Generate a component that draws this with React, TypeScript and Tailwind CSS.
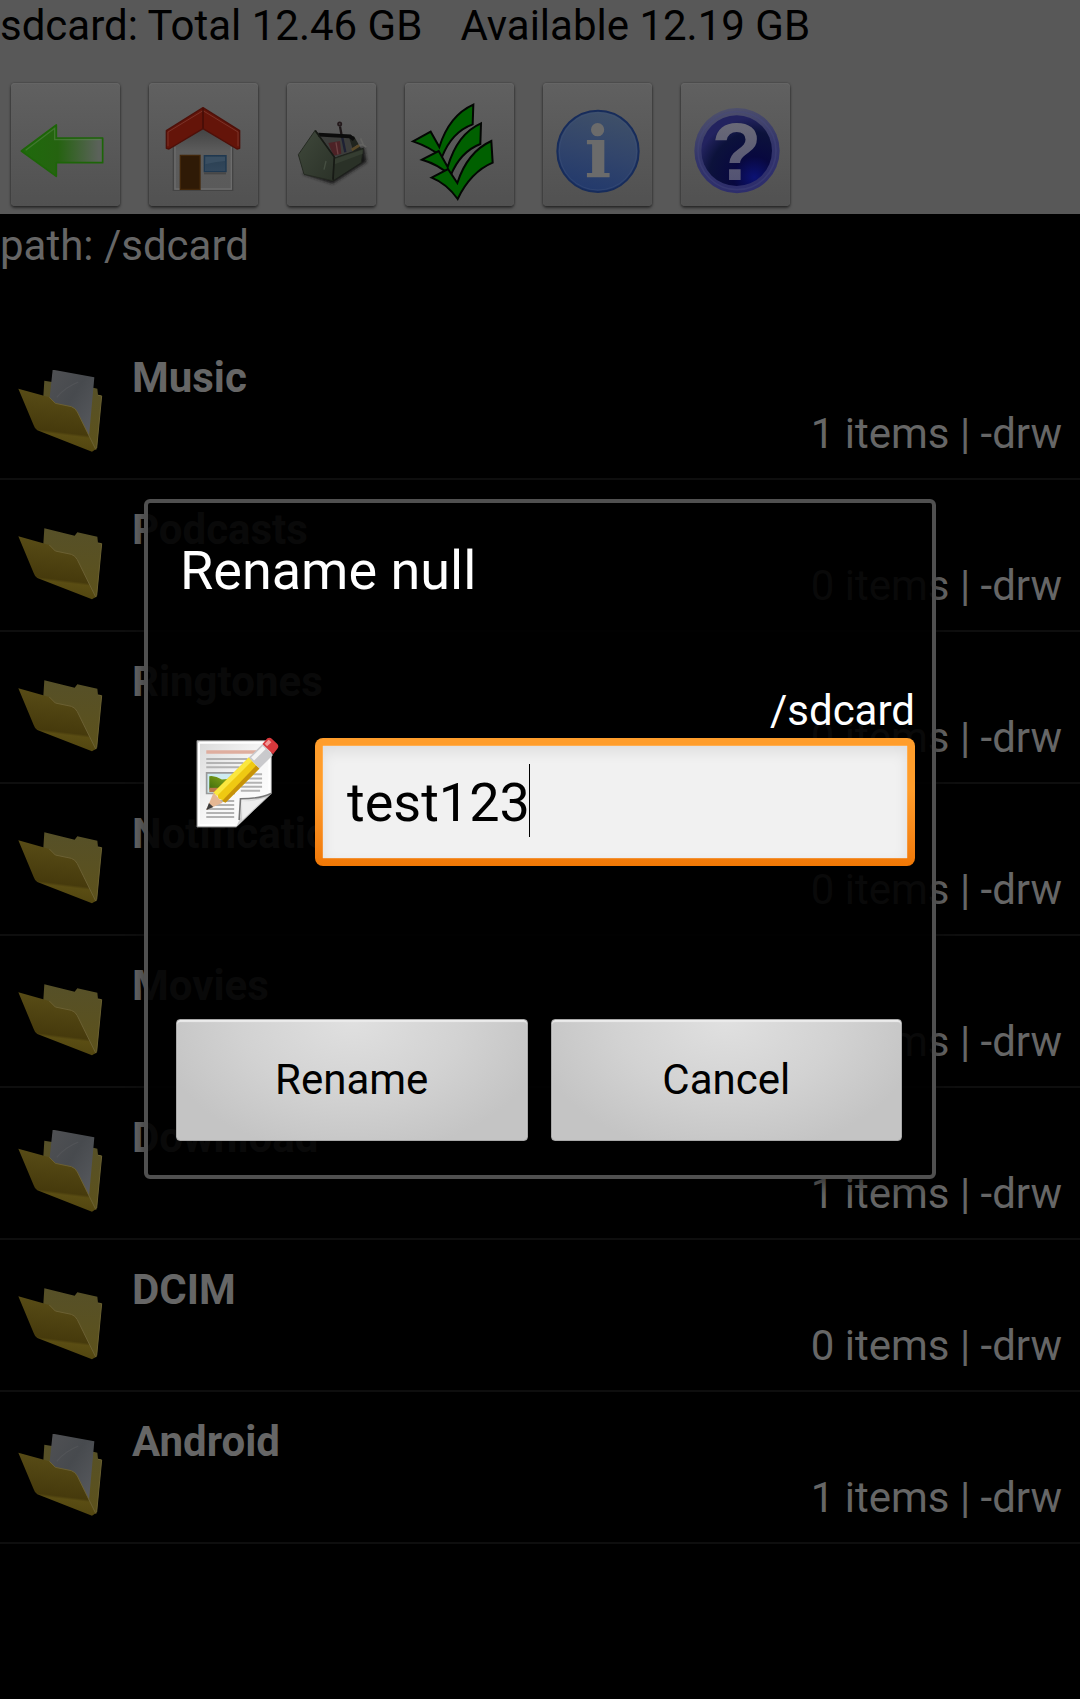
import { useState, type ReactNode } from "react";

const folders = [
  { name: "Music", items: 1 },
  { name: "Podcasts", items: 0 },
  { name: "Ringtones", items: 0 },
  { name: "Notifications", items: 0 },
  { name: "Movies", items: 0 },
  { name: "Download", items: 1 },
  { name: "DCIM", items: 0 },
  { name: "Android", items: 1 },
];

function BackIcon() {
  return (
    <svg viewBox="36 248 327 369" className="h-full w-full" aria-hidden="true">
      <defs>
        <linearGradient id="arrow" x1="0" x2="1" y1="0" y2="0">
          <stop offset="0" stopColor="#1f6a0c" />
          <stop offset="0.45" stopColor="#256310" />
          <stop offset="0.95" stopColor="#5b625a" />
        </linearGradient>
      </defs>
      <path d="M67 452 172 374V413H311V487H172V528Z" fill="url(#arrow)" stroke="#1d6508" strokeWidth="5" strokeLinejoin="round" />
      <path d="M80 450 167 384V418H305" fill="none" stroke="#5d8a50" strokeWidth="4" opacity="0.5" />
    </svg>
  );
}

function HomeIcon() {
  return (
    <svg viewBox="447 248 327 369" className="h-full w-full" aria-hidden="true">
      <defs>
        <linearGradient id="wall" x1="0" x2="0" y1="0" y2="1">
          <stop offset="0" stopColor="#3f3f3f" />
          <stop offset="0.4" stopColor="#5c5c5c" />
          <stop offset="1" stopColor="#5a5a5a" />
        </linearGradient>
        <linearGradient id="pane" x1="0" x2="0" y1="0" y2="1">
          <stop offset="0" stopColor="#2a3f52" />
          <stop offset="1" stopColor="#32475b" />
        </linearGradient>
      </defs>
      <path d="M520 430 609 375 698 430V570H520Z" fill="url(#wall)" stroke="#444" strokeWidth="4" />
      <path d="M525 440V566H694V440" fill="none" stroke="#6c6c6c" strokeWidth="4" />
      <path d="M541 465H600V567H541Z" fill="#2f1a06" stroke="#42270b" strokeWidth="4" />
      <path d="M613 466H678V514H613Z" fill="url(#pane)" stroke="#1f3850" strokeWidth="4" />
      <path d="M616 492Q645 484 675 482V469H616Z" fill="#394e61" />
      <path d="M612 519H678" stroke="#474747" strokeWidth="6" />
      <path d="M609 322 719 391V444L711 446 609 385 507 446 499 444V391Z" fill="#641409" stroke="#4e1009" strokeWidth="4" strokeLinejoin="round" />
      <path d="M609 331 504 395V438M609 331 714 395V438" fill="none" stroke="#7a3329" strokeWidth="3" />
      <path d="M609 324V384" stroke="#3f0c06" strokeWidth="4" />
    </svg>
  );
}

function ToolboxIcon() {
  return (
    <svg viewBox="861 248 267 369" className="h-full w-full" aria-hidden="true">
      <defs>
        <filter id="boxShadow" x="-20%" y="-20%" width="140%" height="140%">
          <feGaussianBlur stdDeviation="5" />
        </filter>
        <linearGradient id="boxFront" x1="0" x2="1" y1="0" y2="1">
          <stop offset="0" stopColor="#3f483b" />
          <stop offset="1" stopColor="#2b3228" />
        </linearGradient>
      </defs>
      <path d="M905 520 998 550 1100 485 1092 440 1000 500Z" fill="#161616" filter="url(#boxShadow)" />
      <path d="M960 408 1050 412 1086 458 1000 470Z" fill="#3c3d3b" />
      <path d="M1046 408 1062 408 1086 450 1060 452Z" fill="#20241e" />
      <path d="M985 428 1020 422 1024 460 1000 466Z" fill="#4c2226" />
      <path d="M1008 426 1014 462" stroke="#6d4143" strokeWidth="4" />
      <path d="M1026 408 1036 456" stroke="#1e2134" strokeWidth="7" />
      <path d="M1062 445Q1076 430 1090 434L1082 414M1090 434 1099 440" fill="none" stroke="#646462" strokeWidth="5" />
      <path d="M1055 449 1078 435" stroke="#5a4928" strokeWidth="8" />
      <path d="M1026 412 1020 378" stroke="#1d1718" strokeWidth="7" />
      <circle cx="1019" cy="371" r="5" fill="#4b4446" stroke="#241a1c" strokeWidth="5" />
      <path d="M1000 474 1090 444 1084 487 1000 541Z" fill="#2a3127" stroke="#1d201b" strokeWidth="3" />
      <path d="M1004 476 1088 448V460L1004 492Z" fill="#353d31" />
      <path d="M946 389 1003 470 998 541 912 522 895 463Z" fill="url(#boxFront)" stroke="#252a22" strokeWidth="3" strokeLinejoin="round" />
      <path d="M978 482 972 508" stroke="#464f42" strokeWidth="4" />
      <path d="M955 403 1050 408 1062 418" fill="none" stroke="#0c0c0c" strokeWidth="11" />
      <path d="M946 391 1003 470 999 538" fill="none" stroke="#171a15" strokeWidth="5" />
    </svg>
  );
}

function ChecksIcon() {
  return (
    <svg viewBox="75 248 327 369" className="h-full w-full" aria-hidden="true">
      <g fill="#006000" stroke="#030603" strokeWidth="6" strokeLinejoin="miter">
        <path d="M99 423 152 394 178 440Q208 345 280 313L278 372Q215 395 186 470Q150 440 99 423Z" />
        <path d="M126 478 176 452 203 500Q232 400 303 369L301 431Q240 455 212 526Q175 492 126 478Z" />
        <path d="M155 532 204 506 232 548Q262 455 334 422L338 487Q272 515 233 596Q200 550 155 532Z" />
      </g>
    </svg>
  );
}

function InfoIcon() {
  return (
    <svg viewBox="489 248 327 369" className="h-full w-full" aria-hidden="true">
      <defs>
        <linearGradient id="info" x1="0.6" x2="0.35" y1="0" y2="1">
          <stop offset="0" stopColor="#3f5068" />
          <stop offset="0.5" stopColor="#32456b" />
          <stop offset="1" stopColor="#22396c" />
        </linearGradient>
      </defs>
      <circle cx="654" cy="453" r="122" fill="url(#info)" stroke="#172c5b" strokeWidth="6" />
      <circle cx="654" cy="453" r="116" fill="none" stroke="#40557c" strokeWidth="3" opacity="0.4" />
      <text x="654" y="531" textAnchor="middle" className="fill-[#6b6b6b] font-['DejaVu_Serif'] text-[212px] font-bold">
        i
      </text>
    </svg>
  );
}

function HelpIcon() {
  return (
    <svg viewBox="903 248 327 369" className="h-full w-full" aria-hidden="true">
      <defs>
        <linearGradient id="ring" x1="0.4" x2="0.6" y1="0" y2="1">
          <stop offset="0" stopColor="#4e506b" />
          <stop offset="0.5" stopColor="#33356a" />
          <stop offset="1" stopColor="#2d2d6c" />
        </linearGradient>
        <radialGradient id="disc" cx="0.75" cy="0.88" r="0.85">
          <stop offset="0" stopColor="#0c1274" />
          <stop offset="0.35" stopColor="#08083f" />
          <stop offset="0.75" stopColor="#0c123b" />
          <stop offset="1" stopColor="#23235f" />
        </radialGradient>
        <linearGradient id="mark" x1="0" x2="0" y1="0" y2="1">
          <stop offset="0" stopColor="#707078" />
          <stop offset="1" stopColor="#4c4c72" />
        </linearGradient>
      </defs>
      <circle cx="1071" cy="451" r="128" fill="url(#ring)" />
      <circle cx="1071" cy="451" r="117" fill="none" stroke="#47497c" strokeWidth="5" opacity="0.4" />
      <circle cx="1070" cy="451" r="106" fill="url(#disc)" />
      <text x="1070" y="539" textAnchor="middle" fill="url(#mark)" className="font-['Liberation_Sans'] text-[246px] font-bold">
        ?
      </text>
    </svg>
  );
}

function FolderIcon({ full }: { full: boolean }) {
  return (
    <svg viewBox={full ? "24 30 255 252" : "24 43 255 252"} className="h-[84px] w-[85px]" aria-hidden="true">
      <defs>
        <linearGradient id="flap" x1="0.45" x2="0.3" y1="0" y2="1">
          <stop offset="0" stopColor="#594d17" />
          <stop offset="0.66" stopColor="#463a0c" />
          <stop offset="0.7" stopColor="#5a4d13" />
          <stop offset="1" stopColor="#4f430f" />
        </linearGradient>
        <linearGradient id="back" x1="0" x2="0" y1="0" y2="1">
          <stop offset="0" stopColor="#565028" />
          <stop offset="1" stopColor="#5d521b" />
        </linearGradient>
        <linearGradient id="paper" x1="0" x2="1" y1="0" y2="1">
          <stop offset="0" stopColor="#505154" />
          <stop offset="0.45" stopColor="#474a4e" />
          <stop offset="1" stopColor="#5a5c60" />
        </linearGradient>
      </defs>
      <path
        d={
          full
            ? "M103 62 126 66 253 84 262 86 264 104 275 107 260 268 246 270 98 140Z"
            : "M103 62 194 84 202 74 262 87 264 106 275 108 260 268 246 270 98 140Z"
        }
        fill="url(#back)"
      />
      <path d="M264 106 275 108 260 264" fill="none" stroke="#6a6030" strokeWidth="3" />
      {full && <path d="M128 29 253 52 236 240 116 140Z" fill="url(#paper)" />}
      {full && <path d="M140 112Q165 82 205 66" fill="none" stroke="#585a5d" strokeWidth="4" opacity="0.6" />}
      <path d="M25 86 118 112 136 130 184 140Q196 144 202 156L257 268 246 275 82 211Q74 206 71 196Z" fill="url(#flap)" />
      <path d="M118 112 136 130 184 140Q196 144 202 156L257 268" fill="none" stroke="#6b6033" strokeWidth="3" />
    </svg>
  );
}

function EditNoteIcon() {
  return (
    <svg viewBox="107 110 250 274" className="mt-[51px] h-[91px] w-[83px] shrink-0" aria-hidden="true">
      <defs>
        <linearGradient id="sheet" x1="0" x2="1" y1="0" y2="1">
          <stop offset="0" stopColor="#d9d9d9" />
          <stop offset="0.5" stopColor="#f7f7f7" />
          <stop offset="1" stopColor="#ffffff" />
        </linearGradient>
        <linearGradient id="curl" x1="0" x2="1" y1="0" y2="1">
          <stop offset="0" stopColor="#ffffff" />
          <stop offset="0.5" stopColor="#c9c9c9" />
          <stop offset="0.7" stopColor="#555" />
        </linearGradient>
        <linearGradient id="leaf" x1="0" x2="1" y1="1" y2="0">
          <stop offset="0" stopColor="#3f6d0c" />
          <stop offset="1" stopColor="#8cab1c" />
        </linearGradient>
      </defs>
      <path d="M110 121H334V280L228 381H110Z" fill="url(#sheet)" stroke="#8a8a8a" strokeWidth="3" />
      <path d="M116 127H328V270M116 127V375H224" fill="none" stroke="#fff" strokeWidth="6" />
      <path d="M138 155H290" stroke="#dfae9f" strokeWidth="11" />
      <path d="M138 176H262M138 188H250M138 201H238M250 222H306M245 235H306M242 248H306M242 260H306M242 272H300M170 303H222M160 315H222M138 327H222M138 339H222M138 351H222" stroke="#b3b3b3" strokeWidth="6" />
      <path d="M139 218H222V280H139Z" fill="#cdeaf0" stroke="#999" strokeWidth="5" />
      <path d="M147 228Q165 225 185 238L210 236V262L147 268Z" fill="url(#leaf)" />
      <path d="M147 263H200V276H147Z" fill="#b8794d" />
      <path d="M334 280Q300 298 241 296V352L228 381Z" fill="url(#curl)" />
      <path d="M333 280Q300 296 241 296L237 360" fill="none" stroke="#777" strokeWidth="5" />
      <path d="M246 304Q285 304 318 292L246 360Z" fill="#eeeeee" />
      <path d="M138 330 160 277 187 308Z" fill="#e5b793" />
      <path d="M160 277 266 172 298 205 196 306Q188 308 187 300 172 298 172 285Z" fill="#efc912" />
      <path d="M160 277 266 172 276 182 170 288Z" fill="#fbe73e" />
      <path d="M186 302 288 196 298 205 196 308Z" fill="#c79209" />
      <path d="M138 330 146 309 159 321Z" fill="#3c3c3c" />
      <path d="M266 172 307 131 339 164 298 205Z" fill="#c9c9cc" />
      <path d="M273 172 308 137 317 146 282 181Z" fill="#f4f4f4" />
      <path d="M307 131 322 114Q330 110 336 116L352 131Q358 138 352 145L339 162Z" fill="#d8383c" />
      <path d="M314 130 326 118 334 126 321 138Z" fill="#f29a98" />
    </svg>
  );
}

function ToolButton({ label, narrow = false, children }: { label: string; narrow?: boolean; children: ReactNode }) {
  return (
    <button
      type="button"
      aria-label={label}
      className={
        "h-[123px] rounded-sm bg-linear-to-b from-[#606060] to-[#515151] shadow-[0_2px_3px_rgba(0,0,0,0.5),0_0_2px_rgba(0,0,0,0.4),inset_0_1px_1px_#676767] " +
        (narrow ? "w-[89px]" : "w-[109px]")
      }
    >
      {children}
    </button>
  );
}

function DialogButton({ children }: { children: ReactNode }) {
  return (
    <button
      type="button"
      className="h-[122px] flex-1 rounded-sm border border-[#a8a8a8] bg-[radial-gradient(ellipse_farthest-corner_at_50%_0%,#e0e0e0_0%,#d2d2d2_45%,#c4c4c4_80%)] text-[42px] leading-[52px] text-black shadow-[inset_0_2px_1px_#ececec]"
    >
      {children}
    </button>
  );
}

export default function App() {
  const [name, setName] = useState("test123");

  return (
    <div className="relative min-h-screen bg-black font-['Roboto',sans-serif] text-[42px] leading-[52px] text-[#666666]">
      <header className="bg-[#585858] pb-2 text-black">
        <div className="flex gap-[38px]">
          <p>sdcard: Total 12.46 GB</p>
          <p>Available 12.19 GB</p>
        </div>
        <nav aria-label="Tools" className="mt-[31px] flex gap-[29px] pl-[11px]">
          <ToolButton label="Back"><BackIcon /></ToolButton>
          <ToolButton label="Home"><HomeIcon /></ToolButton>
          <ToolButton label="Tools" narrow><ToolboxIcon /></ToolButton>
          <ToolButton label="Select all"><ChecksIcon /></ToolButton>
          <ToolButton label="Info"><InfoIcon /></ToolButton>
          <ToolButton label="Help"><HelpIcon /></ToolButton>
        </nav>
      </header>

      <main>
        <p className="pt-1.5">path: /sdcard</p>
        <ul className="mt-14">
          {folders.map((folder) => (
            <li key={folder.name} className="flex items-start gap-[29px] border-b-2 border-[#0e0e0e] pt-6 pr-[18px] pb-[18px] pl-[18px]">
              <div className="pt-[18px]">
                <FolderIcon full={folder.items > 0} />
              </div>
              <div className="flex flex-1 flex-col gap-1">
                <h2 className="font-bold">{folder.name}</h2>
                <p className="text-right">{folder.items} items | -drw</p>
              </div>
            </li>
          ))}
        </ul>
      </main>

      <div className="absolute inset-0 flex items-center justify-center pb-[22px]">
        <form
          role="dialog"
          aria-labelledby="dialog-title"
          onSubmit={(event) => event.preventDefault()}
          className="w-full max-w-[792px] rounded-md border-4 border-[#505050] bg-black/91 pt-9 pb-[34px] shadow-[0_6px_16px_rgba(0,0,0,0.5)]"
        >
          <h1 id="dialog-title" className="pl-8 text-[54px] leading-[64px] text-white">
            Rename null
          </h1>
          <div className="mt-[83px] flex items-start gap-9 pr-[17px] pl-12">
            <EditNoteIcon />
            <div className="flex min-w-0 flex-1 flex-col">
              <label htmlFor="file-name" className="pb-0.5 text-right leading-[50px] text-white">
                /sdcard
              </label>
              <div className="relative rounded-lg bg-linear-to-b from-[#ff9d2b] from-40% to-[#f07805] p-2">
                <input
                  id="file-name"
                  type="text"
                  value={name}
                  onChange={(event) => setName(event.target.value)}
                  className="block h-[112px] w-full bg-[#f1f1f1] pt-0.5 pl-6 text-[54px] leading-[64px] text-black caret-transparent shadow-[inset_0_6px_14px_rgba(0,0,0,0.08),0_0_1px_#fff] outline-none"
                />
                <span className="absolute top-[26px] left-[214px] h-[73px] w-px bg-black" aria-hidden="true" />
              </div>
            </div>
          </div>
          <div className="mt-[153px] flex gap-[23px] pr-[30px] pl-7">
            <DialogButton>Rename</DialogButton>
            <DialogButton>Cancel</DialogButton>
          </div>
        </form>
      </div>
    </div>
  );
}
